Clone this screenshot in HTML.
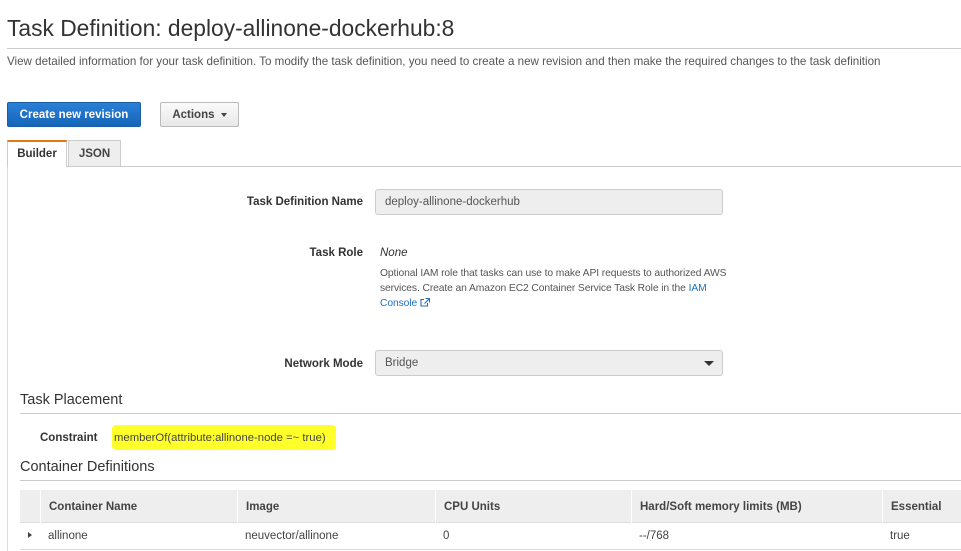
<!DOCTYPE html>
<html><head><style>
*{margin:0;padding:0;box-sizing:border-box}
body{width:961px;height:551px;overflow:hidden;background:#fff;font-family:"Liberation Sans",Arial,sans-serif;color:#333;position:relative}
.a{position:absolute;white-space:nowrap}
.lbl{position:absolute;font-size:11.5px;font-weight:bold;color:#333;text-align:right;width:200px}
.th{position:absolute;top:490px;height:33px;line-height:33px;font-size:11.5px;font-weight:bold;color:#444;padding-left:8px;border-left:1px solid #fff}
.td{position:absolute;top:523px;height:26px;line-height:26px;font-size:11.5px;color:#444}
</style></head><body>
<div class="a" style="left:7px;top:15px;font-size:22.8px;color:#333">Task Definition: deploy-allinone-dockerhub:8</div>
<div class="a" style="left:7px;top:48px;width:954px;border-top:1px solid #ccc"></div>
<div class="a" style="left:7px;top:55px;font-size:11.6px;color:#555">View detailed information for your task definition. To modify the task definition, you need to create a new revision and then make the required changes to the task definition</div>

<div class="a" style="left:7px;top:102px;width:134px;height:25px;background:linear-gradient(#2a7fd6,#1566b8);border:1px solid #1a5ea8;border-radius:2px;color:#fff;font-size:11.5px;font-weight:bold;text-align:center;line-height:24px">Create new revision</div>
<div class="a" style="left:160px;top:102px;width:79px;height:25px;background:linear-gradient(#fafafa,#e8e8e8);border:1px solid #bbb;border-radius:2px;color:#444;font-size:11.5px;font-weight:bold;text-align:center;line-height:24px">Actions <span style="display:inline-block;border-left:3.5px solid transparent;border-right:3.5px solid transparent;border-top:4px solid #444;vertical-align:middle;margin-left:3px"></span></div>

<div class="a" style="left:7px;top:166px;width:954px;border-top:1px solid #ccc"></div>
<div class="a" style="left:7px;top:166px;height:385px;border-left:1px solid #ddd"></div>
<div class="a" style="left:7px;top:140px;width:60px;height:27px;background:#fff;border:1px solid #ccc;border-top:2px solid #e47911;border-bottom:none;font-size:11.5px;font-weight:bold;text-align:center;line-height:25px">Builder</div>
<div class="a" style="left:68px;top:140px;width:53px;height:26px;background:#eee;border:1px solid #ccc;border-bottom:none;font-size:11.5px;font-weight:bold;text-align:center;line-height:26px;color:#444">JSON</div>

<div class="lbl" style="left:163px;top:196px">Task Definition Name</div>
<div class="a" style="left:375px;top:189px;width:348px;height:26px;background:#eee;border:1px solid #ccc;border-radius:3px;font-size:11.5px;color:#555;padding-left:9px;line-height:25px">deploy-allinone-dockerhub</div>

<div class="lbl" style="left:163px;top:247px">Task Role</div>
<div class="a" style="left:380px;top:247px;font-size:11.5px;font-style:italic;color:#333">None</div>
<div class="a" style="left:380px;top:266px;font-size:10.3px;color:#555;line-height:15px;white-space:normal;width:362px;letter-spacing:-0.1px">Optional IAM role that tasks can use to make API requests to authorized AWS services. Create an Amazon EC2 Container Service Task Role in the <span style="color:#1e6fbf">IAM Console <svg width="10" height="9" viewBox="0 0 10 9" style="vertical-align:-1px"><path d="M4 1.5H1v6.5h6.5V5" fill="none" stroke="#1e6fbf" stroke-width="1.1"/><path d="M5.5 .5H9.5V4.5M9.5 .5 4.5 5.5" fill="none" stroke="#1e6fbf" stroke-width="1.1"/></svg></span></div>

<div class="lbl" style="left:163px;top:358px">Network Mode</div>
<div class="a" style="left:375px;top:350px;width:348px;height:26px;background:#eee;border:1px solid #ccc;border-radius:3px;font-size:11.5px;color:#555;padding-left:9px;line-height:25px">Bridge<span style="position:absolute;right:8px;top:10px;border-left:5px solid transparent;border-right:5px solid transparent;border-top:5px solid #333"></span></div>

<div class="a" style="left:20px;top:392px;font-size:14.5px;color:#333">Task Placement</div>
<div class="a" style="left:20px;top:413px;width:941px;border-top:1px solid #ccc"></div>
<div class="a" style="left:40px;top:432px;font-size:11.5px;font-weight:bold">Constraint</div>
<div class="a" style="left:112px;top:425px;width:224px;height:25px;background:#ffff2a;border-radius:4px"></div>
<div class="a" style="left:114px;top:432px;font-size:11.3px;color:#444">memberOf(attribute:allinone-node =~ true)</div>

<div class="a" style="left:20px;top:459px;font-size:14.5px;color:#333">Container Definitions</div>
<div class="a" style="left:20px;top:480px;width:941px;border-top:1px solid #ccc"></div>
<div class="a" style="left:20px;top:490px;width:941px;height:33px;background:#eee;border-bottom:1px solid #ddd"></div>
<div class="th" style="left:40px;line-height:34px">Container Name</div>
<div class="th" style="left:237px;line-height:34px">Image</div>
<div class="th" style="left:435px;line-height:34px">CPU Units</div>
<div class="th" style="left:631px;line-height:34px">Hard/Soft memory limits (MB)</div>
<div class="th" style="left:882px;line-height:34px">Essential</div>
<div class="a" style="left:28px;top:532px;border-top:3.5px solid transparent;border-bottom:3.5px solid transparent;border-left:4px solid #444"></div>
<div class="td" style="left:48px;line-height:27px">allinone</div>
<div class="td" style="left:245px;line-height:27px">neuvector/allinone</div>
<div class="td" style="left:443px;line-height:27px">0</div>
<div class="td" style="left:639px;line-height:27px">--/768</div>
<div class="td" style="left:890px;line-height:27px">true</div>
<div class="a" style="left:20px;top:549px;width:941px;border-top:1px solid #ddd"></div>
</body></html>
